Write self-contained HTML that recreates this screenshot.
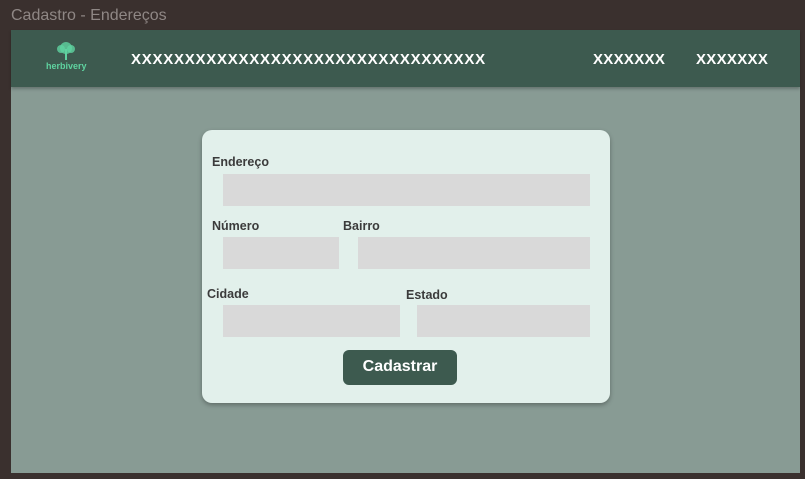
<!DOCTYPE html>
<html><head><style>
body{margin:0;width:805px;height:479px;background:#3a302e;position:relative;overflow:hidden;font-family:"Liberation Sans",sans-serif}
.t{position:absolute;left:11px;top:7px;color:#8f8785;font-size:16px}
.frame{position:absolute;left:11px;top:30px;width:789px;height:443px;background:#889b94}
.hdr{position:absolute;left:0;top:0;width:789px;height:57px;background:#3d5a4f;box-shadow:0 2px 3px rgba(0,0,0,.25)}
.x{position:absolute;color:#fff;font-weight:bold;font-size:15px;letter-spacing:0.75px;top:21px}
.logo{position:absolute;left:35px;top:11px;color:#5fd3a0;font-size:9px;font-weight:bold;text-align:center;width:40px}
.card{position:absolute;left:202px;top:130px;width:408px;height:273px;background:#e2f0eb;border-radius:10px;box-shadow:0 2px 5px rgba(0,0,0,.3)}
.in{position:absolute;background:#d9d9d9}
.l{position:absolute;font-size:12.5px;font-weight:bold;color:#3b3b3b}
.btn{position:absolute;left:343px;top:350px;width:114px;height:35px;background:#3d5a4f;border-radius:6px;color:#fff;font-weight:bold;font-size:16px;text-align:center;line-height:34px}
</style></head><body>
<div class="t">Cadastro - Endereços</div>
<div class="frame">
<div class="hdr">
<div class="logo"><svg width="22" height="20" viewBox="0 0 22 20"><circle cx="11" cy="7" r="6" fill="#5fd3a0" opacity=".8"/><circle cx="6" cy="8" r="4" fill="#5fd3a0" opacity=".8"/><circle cx="16" cy="8" r="4" fill="#5fd3a0" opacity=".8"/><rect x="10" y="8" width="2" height="11" fill="#5fd3a0"/></svg><div style="margin-top:-2px">herbivery</div></div>
<div class="x" style="left:120px">XXXXXXXXXXXXXXXXXXXXXXXXXXXXXXXXX</div>
<div class="x" style="left:582px;letter-spacing:0.3px">XXXXXXX</div>
<div class="x" style="left:685px;letter-spacing:0.3px">XXXXXXX</div>
</div></div>
<div class="card"></div>
<div class="l" style="left:212px;top:155px">Endereço</div>
<div class="in" style="left:223px;top:174px;width:367px;height:32px"></div>
<div class="l" style="left:212px;top:219px">Número</div>
<div class="l" style="left:343px;top:219px">Bairro</div>
<div class="in" style="left:223px;top:237px;width:116px;height:32px"></div>
<div class="in" style="left:358px;top:237px;width:232px;height:32px"></div>
<div class="l" style="left:207px;top:287px">Cidade</div>
<div class="l" style="left:406px;top:288px">Estado</div>
<div class="in" style="left:223px;top:305px;width:177px;height:32px"></div>
<div class="in" style="left:417px;top:305px;width:173px;height:32px"></div>
<div class="btn">Cadastrar</div>
</body></html>
